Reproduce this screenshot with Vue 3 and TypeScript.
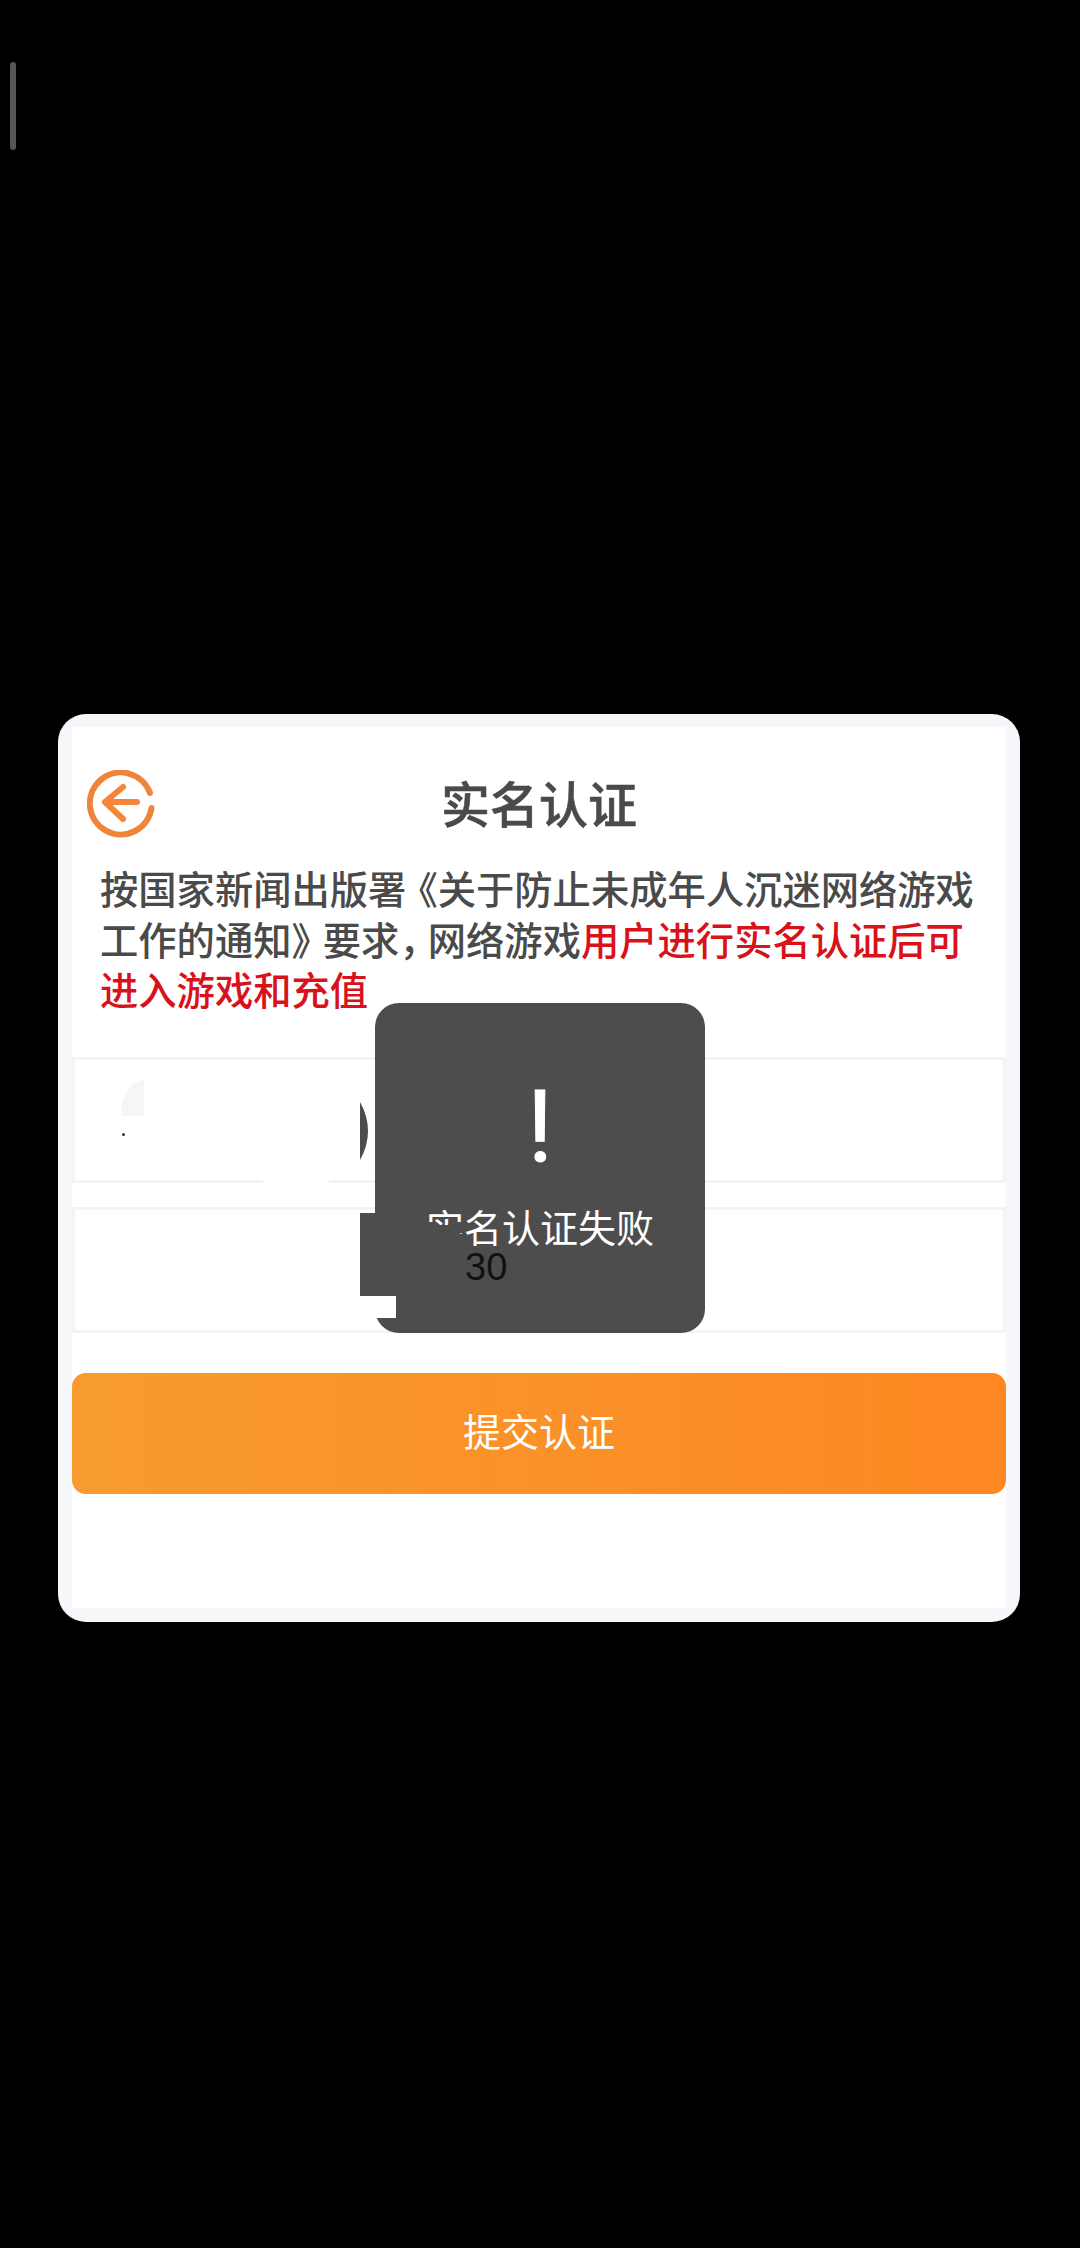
<script setup lang="ts">
const introStart = "按国家新闻出版署";
const introBook = "关于防止未成年人沉迷网络游戏工作的通知";
const introAfter = "要求";
const introTail = "网络游戏";
const highlight = "用户进行实名认证后可进入游戏和充值";
</script>

<template>
  <div class="page">
    <div class="scroll-thumb"></div>

    <section class="card">
      <div class="inner">
        <header class="head">
          <svg class="back" viewBox="0 0 68 68" fill="none">
            <path d="M63 23 A31 31 0 1 0 64.5 38" stroke="#ef853a" stroke-width="6" stroke-linecap="round" />
            <path d="M18 32 H50 M36 17 L18 32 L36 49" stroke="#f5853a" stroke-width="6" stroke-linecap="round" stroke-linejoin="round" />
          </svg>
          <h1 class="title">实名认证</h1>
        </header>

        <p class="intro">{{ introStart }}<span class="open">《</span>{{ introBook }}<span class="close">》</span>{{ introAfter }}<span class="comma">，</span>{{ introTail }}<span class="red">{{ highlight }}</span></p>

        <div class="field"></div>
        <div class="field second"></div>

        <button class="submit">提交认证</button>
      </div>
    </section>

    <!-- redaction leftovers that lie over the fields -->
    <div class="blot-grey"></div>
    <div class="blot-dot"></div>
    <div class="blot-oval"></div>
    <svg class="blot-arc" viewBox="0 0 8 58"><path d="M0 0 Q8 14 8 29 Q8 44 0 58 Z" fill="#4d4d4d" /></svg>

    <div class="toast">
      <div class="bang">!</div>
      <div class="toast-text">实名认证失败</div>
    </div>

    <div class="blot-white"></div>
    <div class="blot-dark"></div>
    <div class="count">30</div>
  </div>
</template>

<style scoped>
.page {
  position: relative;
  width: 1080px;
  height: 2248px;
  background: #000;
  overflow: hidden;
  font-family: "Noto Sans CJK SC", "Liberation Sans", sans-serif;
}
.scroll-thumb {
  position: absolute;
  left: 10px;
  top: 62px;
  width: 6px;
  height: 88px;
  border-radius: 3px;
  background: #555;
}
.card {
  position: absolute;
  left: 58px;
  top: 714px;
  width: 962px;
  height: 908px;
  box-sizing: border-box;
  padding: 13px 14px 14px;
  background: #f5f7fa;
  border-radius: 28px;
}
.inner {
  height: 100%;
  box-sizing: border-box;
  background: #fff;
  padding-top: 43px;
  display: flex;
  flex-direction: column;
}
.head {
  display: grid;
  grid-template-columns: 1fr auto 1fr;
  align-items: center;
  height: 67px;
}
.back {
  width: 68px;
  height: 68px;
  margin-left: 15px;
  filter: blur(0.5px);
}
.title {
  margin: 0;
  padding-bottom: 5px;
  font-size: 49px;
  line-height: 62px;
  font-weight: 500;
  -webkit-text-stroke: 0.6px #4a4a4a;
  color: #4a4a4a;
}
.intro {
  margin: 26px 0 2px;
  padding: 0 30px 0 28px;
  font-size: 38.3px;
  line-height: 50.5px;
  font-weight: 500;
  color: #4a4a4a;
}
.open {
  margin-left: -7px;
}
.close {
  letter-spacing: -7px;
}
.comma {
  letter-spacing: -10px;
}
.red {
  color: #d8111b;
}
.field {
  height: 126px;
  box-sizing: border-box;
  margin-top: 40px;
  border: 3px solid #f4f4f4;
}
.field.second {
  margin-top: 24px;
}
.submit {
  display: block;
  width: 100%;
  height: 121px;
  margin-top: 40px;
  padding: 0 0 7px;
  border: 0;
  border-radius: 14px;
  background: linear-gradient(90deg, #f79b30, #fe8722);
  color: #fff;
  font-family: inherit;
  font-size: 38px;
}
.blot-grey {
  position: absolute;
  left: 121px;
  top: 1080px;
  width: 23px;
  height: 36px;
  background: #f6f6f6;
  border-top-left-radius: 23px 36px;
}
.blot-dot {
  position: absolute;
  left: 122px;
  top: 1133px;
  width: 3px;
  height: 3px;
  border-radius: 50%;
  background: #333;
}
.blot-oval {
  position: absolute;
  left: 262px;
  top: 1176px;
  width: 68px;
  height: 9px;
  border-radius: 50%;
  background: #fff;
}
.blot-arc {
  position: absolute;
  left: 360px;
  top: 1102px;
  width: 8px;
  height: 58px;
}
.toast {
  position: absolute;
  left: 375px;
  top: 1003px;
  width: 330px;
  height: 330px;
  border-radius: 24px;
  background: #4d4d4d;
  color: #fff;
  text-align: center;
}
.bang {
  margin-top: 66px;
  font-family: Roboto, sans-serif;
  font-size: 101px;
  font-weight: 400;
  -webkit-text-stroke: 1px #fff;
  line-height: 115px;
}
.toast-text {
  margin-top: 17px;
  font-size: 38px;
  line-height: 50px;
}
.blot-white {
  position: absolute;
  left: 375px;
  top: 1296px;
  width: 21px;
  height: 22px;
  background: #fff;
}
.blot-dark {
  position: absolute;
  left: 360px;
  top: 1213px;
  width: 104px;
  height: 83px;
  background: #4d4d4d;
  clip-path: polygon(0 0, 66px 0, 66px 12px, 88px 12px, 94px 18px, 104px 22px, 104px 34px, 92px 34px, 104px 83px, 0 83px);
}
.count {
  position: absolute;
  left: 465px;
  top: 1245px;
  font-family: "Liberation Sans", sans-serif;
  font-size: 38px;
  line-height: 44px;
  color: #111;
}
</style>
